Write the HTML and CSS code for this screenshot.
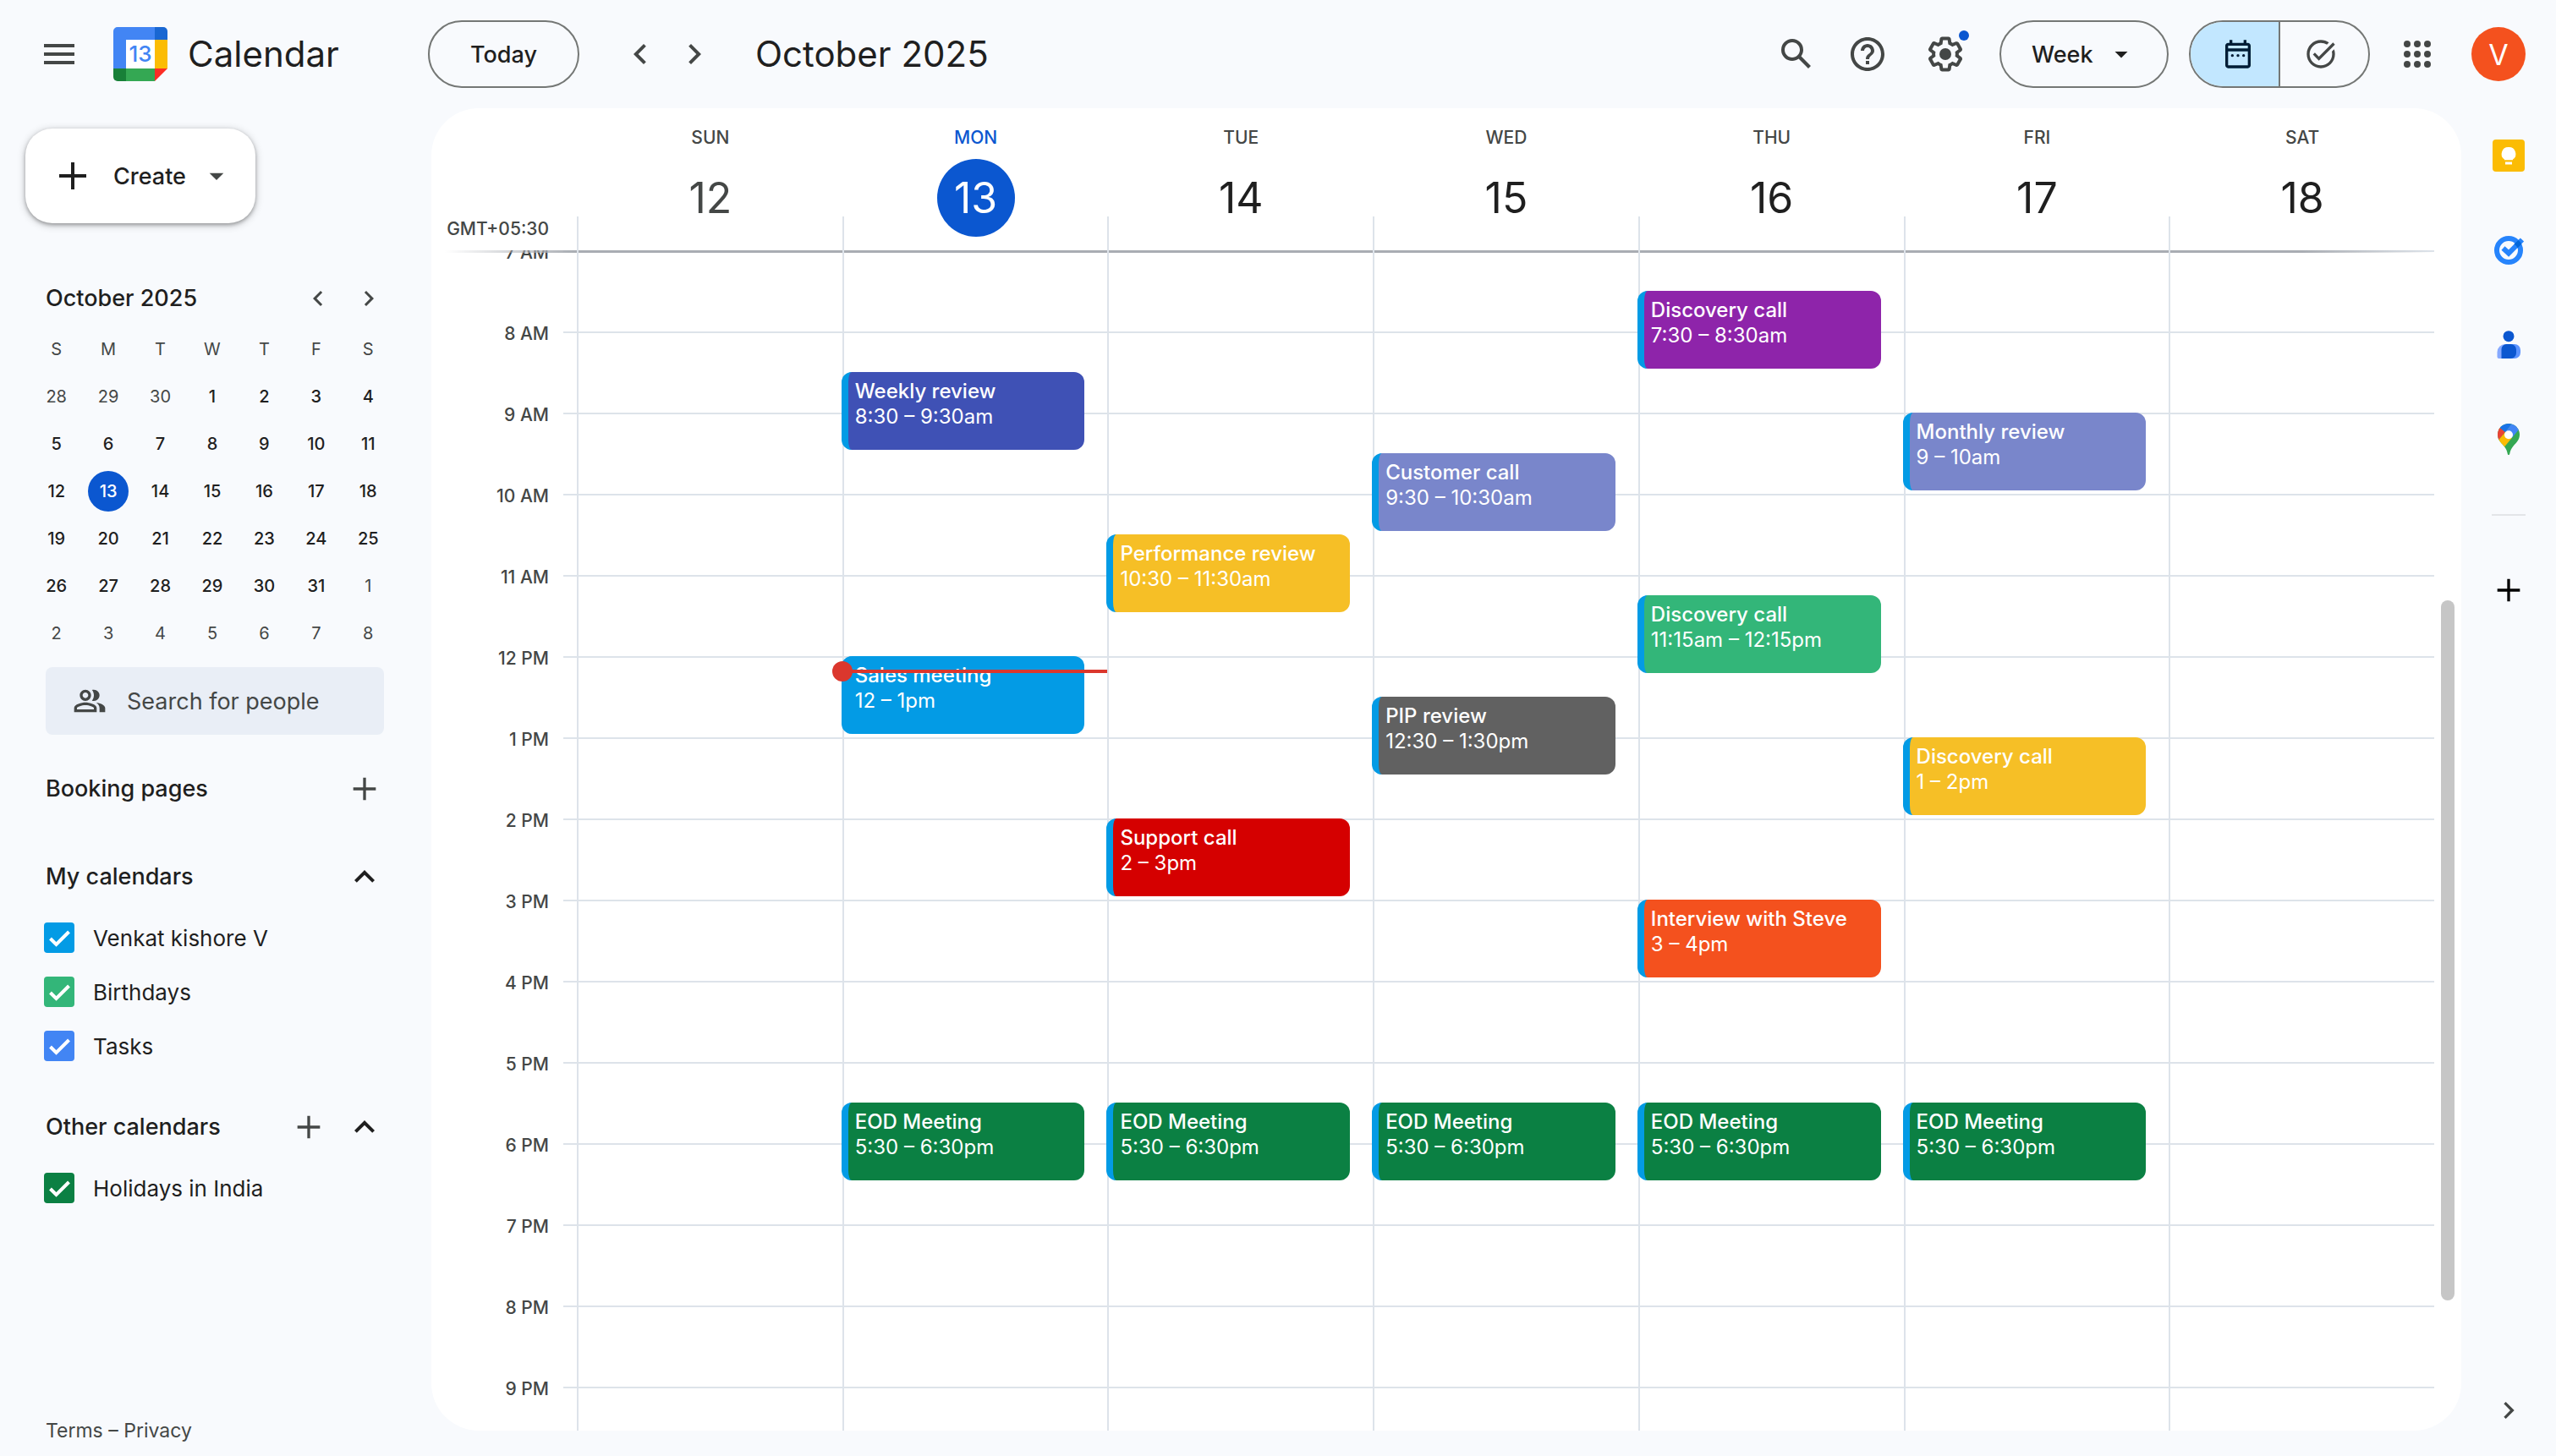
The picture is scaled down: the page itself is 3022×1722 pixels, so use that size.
FILE: index.html
```html
<!DOCTYPE html>
<html lang="en">
<head>
  <meta charset="UTF-8" />
  <meta name="viewport" content="width=device-width, initial-scale=1.0"/>
  <title>Calendar - October 2025</title>
  <link rel="stylesheet" href="styles.css">
</head>
<body>
<div class="app">

  <header class="topbar">
    <div class="brand">
      <button class="icon-btn" aria-label="Main menu">
        <svg class="icon" viewBox="0 0 24 24"><path d="M3 18h18v-2H3v2zm0-5h18v-2H3v2zm0-7v2h18V6H3z"/></svg>
      </button>
      <a class="logo" href="#">
        <svg class="logo-mark" viewBox="0 0 64 64" aria-hidden="true">
          <path fill="#fff" d="M15 15h34v34H15z"/>
          <path fill="#4285f4" d="M5 0h44v15H15v34H0V5a5 5 0 0 1 5-5z"/>
          <path fill="#1967d2" d="M49 0h10a5 5 0 0 1 5 5v10H49z"/>
          <path fill="#fbbc04" d="M49 15h15v34H49z"/>
          <path fill="#34a853" d="M15 49h34v15H15z"/>
          <path fill="#188038" d="M0 49h15v15H5a5 5 0 0 1-5-5z"/>
          <path fill="#fc2d25" d="M49 49h15L49 64z"/>
          <text x="32" y="41" text-anchor="middle" class="logo-day">13</text>
        </svg>
        <span class="logo-name">Calendar</span>
      </a>
    </div>

    <div class="date-nav">
      <button class="pill today">Today</button>
      <div class="arrows">
        <button class="icon-btn" aria-label="Previous week">
          <svg class="icon" viewBox="0 0 24 24"><path d="M15.41 7.41L14 6l-6 6 6 6 1.41-1.41L10.83 12z"/></svg>
        </button>
        <button class="icon-btn" aria-label="Next week">
          <svg class="icon" viewBox="0 0 24 24"><path d="M10 6L8.59 7.41 13.17 12l-4.58 4.59L10 18l6-6z"/></svg>
        </button>
      </div>
      <h1 class="period">October 2025</h1>
    </div>

    <div class="tools">
      <button class="icon-btn" aria-label="Search">
        <svg class="icon" viewBox="0 0 24 24"><path d="M20.49 19l-5.73-5.73C15.53 12.2 16 10.91 16 9.5A6.5 6.5 0 1 0 9.5 16c1.41 0 2.7-.47 3.77-1.24L19 20.49 20.49 19zM5 9.5C5 7.01 7.01 5 9.5 5S14 7.01 14 9.5 11.99 14 9.5 14 5 11.99 5 9.5z"/></svg>
      </button>
      <button class="icon-btn" aria-label="Support">
        <svg class="icon" viewBox="0 0 24 24"><path d="M11 18h2v-2h-2v2zm1-16C6.48 2 2 6.48 2 12s4.48 10 10 10 10-4.48 10-10S17.52 2 12 2zm0 18c-4.41 0-8-3.59-8-8s3.59-8 8-8 8 3.59 8 8-3.59 8-8 8zm0-14c-2.21 0-4 1.79-4 4h2c0-1.1.9-2 2-2s2 .9 2 2c0 2-3 1.75-3 5h2c0-2.25 3-2.5 3-5 0-2.21-1.79-4-4-4z"/></svg>
      </button>
      <button class="icon-btn settings" aria-label="Settings">
        <svg class="icon" viewBox="0 0 24 24"><path d="M13.85 22.25h-3.7c-.74 0-1.36-.54-1.45-1.27l-.27-1.89c-.27-.14-.53-.29-.79-.46l-1.8.72c-.7.26-1.47-.03-1.81-.65L2.2 15.53c-.35-.66-.2-1.44.36-1.88l1.53-1.19c-.01-.15-.02-.3-.02-.46 0-.15.01-.31.02-.46l-1.52-1.19c-.59-.45-.74-1.26-.37-1.88l1.85-3.19c.34-.62 1.11-.9 1.79-.63l1.81.73c.26-.17.52-.32.78-.46l.27-1.91c.09-.7.71-1.25 1.44-1.25h3.7c.74 0 1.36.54 1.45 1.27l.27 1.89c.27.14.53.29.79.46l1.8-.72c.71-.26 1.48.03 1.82.65l1.84 3.18c.36.66.2 1.44-.36 1.88l-1.52 1.19c.01.15.02.3.02.46s-.01.31-.02.46l1.52 1.19c.56.45.72 1.23.37 1.86l-1.86 3.22c-.34.62-1.11.9-1.8.63l-1.8-.72c-.26.17-.52.32-.78.46l-.27 1.91c-.1.68-.72 1.22-1.46 1.22zm-3.23-2h2.76l.37-2.55.53-.22c.44-.18.88-.44 1.34-.78l.45-.34 2.38.96 1.38-2.4-2.03-1.58.07-.56c.03-.26.06-.51.06-.78s-.03-.53-.06-.78l-.07-.56 2.03-1.58-1.39-2.4-2.39.96-.45-.35c-.42-.32-.87-.58-1.33-.77l-.52-.22-.37-2.55h-2.76l-.37 2.55-.53.21c-.44.19-.88.44-1.34.79l-.45.33-2.38-.95-1.39 2.39 2.03 1.58-.07.56a7 7 0 0 0-.06.79c0 .26.02.53.06.78l.07.56-2.03 1.58 1.38 2.4 2.39-.96.45.35c.43.33.86.58 1.33.77l.53.22.38 2.55z"/><circle cx="12" cy="12" r="3.5"/></svg>
        <span class="badge"></span>
      </button>
      <div class="view-select">
        <select class="pill" aria-label="View">
          <option>Day</option>
          <option selected>Week</option>
          <option>Month</option>
          <option>Year</option>
        </select>
        <svg class="caret" viewBox="0 0 24 24" aria-hidden="true"><path d="M7 10l5 5 5-5z"/></svg>
      </div>
      <div class="mode-switch">
        <button class="mode active" aria-label="Calendar view" aria-pressed="true">
          <svg class="icon-md" viewBox="0 0 24 24"><path d="M19 4h-1V2h-2v2H8V2H6v2H5c-1.1 0-2 .9-2 2v14c0 1.1.9 2 2 2h14c1.1 0 2-.9 2-2V6c0-1.1-.9-2-2-2zm0 16H5V10h14v10zm0-12H5V6h14v2z"/><circle cx="8" cy="13" r="1"/><circle cx="12" cy="13" r="1"/><circle cx="16" cy="13" r="1"/></svg>
        </button>
        <button class="mode" aria-label="Tasks view" aria-pressed="false">
          <svg class="icon-md" viewBox="0 0 24 24"><path d="M22 5.18L10.59 16.6l-4.24-4.24 1.41-1.41 2.83 2.83 10-10L22 5.18zm-2.21 5.04c.13.57.21 1.17.21 1.78 0 4.42-3.58 8-8 8s-8-3.58-8-8 3.58-8 8-8c1.58 0 3.04.46 4.28 1.25l1.44-1.44C16.1 2.67 14.13 2 12 2 6.48 2 2 6.48 2 12s4.48 10 10 10 10-4.48 10-10c0-1.19-.22-2.33-.6-3.39l-1.61 1.61z"/></svg>
        </button>
      </div>
      <button class="icon-btn apps" aria-label="Google apps">
        <svg class="icon" viewBox="0 0 24 24"><circle cx="6" cy="6" r="2"/><circle cx="12" cy="6" r="2"/><circle cx="18" cy="6" r="2"/><circle cx="6" cy="12" r="2"/><circle cx="12" cy="12" r="2"/><circle cx="18" cy="12" r="2"/><circle cx="6" cy="18" r="2"/><circle cx="12" cy="18" r="2"/><circle cx="18" cy="18" r="2"/></svg>
      </button>
      <button class="avatar" aria-label="Account">V</button>
    </div>
  </header>

  <aside class="sidebar">
    <button class="create">
      <svg class="icon" viewBox="0 0 24 24"><path d="M20 13h-7v7h-2v-7H4v-2h7V4h2v7h7v2z"/></svg>
      <span>Create</span>
      <svg class="icon-md" viewBox="0 0 24 24"><path d="M7 10l5 5 5-5z"/></svg>
    </button>

    <section class="mini">
      <div class="mini-head">
        <h2>October 2025</h2>
        <button class="mini-arrow" aria-label="Previous month">
          <svg class="icon-sm" viewBox="0 0 24 24"><path d="M15.41 7.41L14 6l-6 6 6 6 1.41-1.41L10.83 12z"/></svg>
        </button>
        <button class="mini-arrow" aria-label="Next month">
          <svg class="icon-sm" viewBox="0 0 24 24"><path d="M10 6L8.59 7.41 13.17 12l-4.58 4.59L10 18l6-6z"/></svg>
        </button>
      </div>
      <table class="mini-table">
        <thead>
          <tr><th>S</th><th>M</th><th>T</th><th>W</th><th>T</th><th>F</th><th>S</th></tr>
        </thead>
        <tbody>
          <tr><td class="out">28</td><td class="out">29</td><td class="out">30</td><td>1</td><td>2</td><td>3</td><td>4</td></tr>
          <tr><td>5</td><td>6</td><td>7</td><td>8</td><td>9</td><td>10</td><td>11</td></tr>
          <tr><td>12</td><td><span class="mini-today">13</span></td><td>14</td><td>15</td><td>16</td><td>17</td><td>18</td></tr>
          <tr><td>19</td><td>20</td><td>21</td><td>22</td><td>23</td><td>24</td><td>25</td></tr>
          <tr><td>26</td><td>27</td><td>28</td><td>29</td><td>30</td><td>31</td><td class="out">1</td></tr>
          <tr><td class="out">2</td><td class="out">3</td><td class="out">4</td><td class="out">5</td><td class="out">6</td><td class="out">7</td><td class="out">8</td></tr>
        </tbody>
      </table>
    </section>

    <label class="people">
      <svg class="icon-md" viewBox="0 0 24 24" aria-hidden="true"><path d="M15 8c0-1.42-.5-2.73-1.33-3.76.42-.14.86-.24 1.33-.24 2.21 0 4 1.79 4 4s-1.79 4-4 4c-.43 0-.84-.09-1.23-.21-.03-.01-.06-.02-.1-.03C14.5 10.73 15 9.42 15 8zm1.66 5.13C18.03 14.06 19 15.32 19 17v3h4v-3c0-2.18-3.58-3.47-6.34-3.87zM9 6c1.1 0 2 .9 2 2s-.9 2-2 2-2-.9-2-2 .9-2 2-2m0 9c2.7 0 5.8 1.29 6 2v1H3v-.99c.2-.72 3.3-2.01 6-2.01M9 4C6.79 4 5 5.79 5 8s1.79 4 4 4 4-1.79 4-4-1.79-4-4-4zm0 9c-2.67 0-8 1.34-8 4v3h16v-3c0-2.66-5.33-4-8-4z"/></svg>
      <input type="text" placeholder="Search for people" aria-label="Search for people">
    </label>

    <section class="side-section">
      <div class="side-head">
        <h2>Booking pages</h2>
        <button class="side-btn" aria-label="Create booking page">
          <svg class="icon-md" viewBox="0 0 24 24"><path d="M20 13h-7v7h-2v-7H4v-2h7V4h2v7h7v2z"/></svg>
        </button>
      </div>
    </section>

    <section class="side-section">
      <div class="side-head">
        <h2>My calendars</h2>
        <button class="side-btn dark" aria-label="Collapse my calendars">
          <svg class="icon" viewBox="0 0 24 24"><path d="M12 8l-6 6 1.41 1.41L12 10.83l4.59 4.58L18 14z"/></svg>
        </button>
      </div>
      <label class="cal-item"><input type="checkbox" class="check peacock" checked> Venkat kishore V</label>
      <label class="cal-item"><input type="checkbox" class="check sage" checked> Birthdays</label>
      <label class="cal-item"><input type="checkbox" class="check tasks" checked> Tasks</label>
    </section>

    <section class="side-section">
      <div class="side-head">
        <h2>Other calendars</h2>
        <button class="side-btn" aria-label="Add other calendars">
          <svg class="icon-md" viewBox="0 0 24 24"><path d="M20 13h-7v7h-2v-7H4v-2h7V4h2v7h7v2z"/></svg>
        </button>
        <button class="side-btn dark" aria-label="Collapse other calendars">
          <svg class="icon" viewBox="0 0 24 24"><path d="M12 8l-6 6 1.41 1.41L12 10.83l4.59 4.58L18 14z"/></svg>
        </button>
      </div>
      <label class="cal-item"><input type="checkbox" class="check basil" checked> Holidays in India</label>
    </section>

    <div class="legal"><a href="#">Terms</a> – <a href="#">Privacy</a></div>
  </aside>

  <main class="week">
    <div class="week-head">
      <div class="tz">GMT+05:30</div>
      <div class="day-head past"><span class="dow">SUN</span><span class="num">12</span></div>
      <div class="day-head current"><span class="dow">MON</span><span class="num">13</span></div>
      <div class="day-head"><span class="dow">TUE</span><span class="num">14</span></div>
      <div class="day-head"><span class="dow">WED</span><span class="num">15</span></div>
      <div class="day-head"><span class="dow">THU</span><span class="num">16</span></div>
      <div class="day-head"><span class="dow">FRI</span><span class="num">17</span></div>
      <div class="day-head"><span class="dow">SAT</span><span class="num">18</span></div>
    </div>

    <div class="week-body">
      <div class="hours">
        <span>7 AM</span><span>8 AM</span><span>9 AM</span><span>10 AM</span><span>11 AM</span>
        <span>12 PM</span><span>1 PM</span><span>2 PM</span><span>3 PM</span><span>4 PM</span>
        <span>5 PM</span><span>6 PM</span><span>7 PM</span><span>8 PM</span><span>9 PM</span>
      </div>

      <!-- every day column is split in 15 minute rows, row 1 = 7 AM -->
      <div class="days">
        <div class="day"></div>
        <div class="day">
          <button class="event blueberry" style="grid-row: 7 / span 4"><b>Weekly review</b><span>8:30 – 9:30am</span></button>
          <button class="event peacock" style="grid-row: 21 / span 4"><b>Sales meeting</b><span>12 – 1pm</span></button>
          <button class="event basil" style="grid-row: 43 / span 4"><b>EOD Meeting</b><span>5:30 – 6:30pm</span></button>
          <div class="now"></div>
        </div>
        <div class="day">
          <button class="event banana" style="grid-row: 15 / span 4"><b>Performance review</b><span>10:30 – 11:30am</span></button>
          <button class="event tomato" style="grid-row: 29 / span 4"><b>Support call</b><span>2 – 3pm</span></button>
          <button class="event basil" style="grid-row: 43 / span 4"><b>EOD Meeting</b><span>5:30 – 6:30pm</span></button>
        </div>
        <div class="day">
          <button class="event lavender" style="grid-row: 11 / span 4"><b>Customer call</b><span>9:30 – 10:30am</span></button>
          <button class="event graphite" style="grid-row: 23 / span 4"><b>PIP review</b><span>12:30 – 1:30pm</span></button>
          <button class="event basil" style="grid-row: 43 / span 4"><b>EOD Meeting</b><span>5:30 – 6:30pm</span></button>
        </div>
        <div class="day">
          <button class="event grape" style="grid-row: 3 / span 4"><b>Discovery call</b><span>7:30 – 8:30am</span></button>
          <button class="event sage" style="grid-row: 18 / span 4"><b>Discovery call</b><span>11:15am – 12:15pm</span></button>
          <button class="event tangerine" style="grid-row: 33 / span 4"><b>Interview with Steve</b><span>3 – 4pm</span></button>
          <button class="event basil" style="grid-row: 43 / span 4"><b>EOD Meeting</b><span>5:30 – 6:30pm</span></button>
        </div>
        <div class="day">
          <button class="event lavender" style="grid-row: 9 / span 4"><b>Monthly review</b><span>9 – 10am</span></button>
          <button class="event banana" style="grid-row: 25 / span 4"><b>Discovery call</b><span>1 – 2pm</span></button>
          <button class="event basil" style="grid-row: 43 / span 4"><b>EOD Meeting</b><span>5:30 – 6:30pm</span></button>
        </div>
        <div class="day"></div>
      </div>

      <div class="scroll-track"><div class="scroll-thumb"></div></div>
    </div>
  </main>

  <nav class="rail">
    <a href="#" aria-label="Keep">
      <svg class="icon-md" viewBox="0 0 40 40"><rect x="1" y="1" width="38" height="38" rx="4" fill="#fbbc04"/><path fill="#fff" d="M20 10a8 8 0 0 0-5 14.5v.7h10v-.7A8 8 0 0 0 20 10z"/><path fill="#fff" d="M16 27.5h8v3h-8z"/></svg>
    </a>
    <a href="#" aria-label="Tasks">
      <svg class="icon-md" viewBox="0 0 40 40"><circle cx="20" cy="20" r="14" fill="none" stroke="#2684fc" stroke-width="6"/><path d="M13.5 17.5l6.5 6L36 7.5" fill="none" stroke="#2684fc" stroke-width="6"/><path fill="#0066da" d="M26.500 12.800l5-4.900c1.800 1.500 3 3.100 3.700 4.900l-4.700 4.700c-.8-2-2.100-3.600-4-4.700z"/></svg>
    </a>
    <a href="#" aria-label="Contacts">
      <svg class="icon-md" viewBox="0 0 40 40"><path fill="#86a9ff" d="M16 19h8v17H8.5a2 2 0 0 1-2-2v-5.5A9.5 9.500 0 0 1 16 19z"/><path fill="#5c94ff" d="M22 19h5a7 7 0 0 1 7 7v3a7 7 0 0 1-7 7h-5z"/><path fill="#0b57d0" d="M17.5 19h5a6.5 6.5 0 0 1 6.5 6.5v4a6.500 6.500 0 0 1-6.500 6.500h-11V25a6 6 0 0 1 6-6z"/><circle cx="20" cy="9.7" r="6.5" fill="#0b57d0"/></svg>
    </a>
    <a href="#" aria-label="Maps">
      <svg class="icon-md" viewBox="0 0 40 40">
        <clipPath id="pin"><path d="M20 1C12.800 1 7 6.800 7 14c0 6 3.500 9 7 13 3 3.500 4 6 4.700 9.500.4 2 2.200 2 2.600 0C22 33 23 30.500 26 27c3.500-4 7-7 7-13C33 6.800 27.200 1 20 1z"/></clipPath>
        <g clip-path="url(#pin)">
          <path fill="#34a853" d="M0 0h40v40H0z"/>
          <path fill="#ea4335" d="M0 0l10.500 6.500L16 11l-7.500 9H0z"/>
          <path fill="#1a73e8" d="M10.500 6.500L6 0h18.500L16 11z"/>
          <path fill="#4285f4" d="M24.500 0H40l-7 7-9.200 11L16 11z"/>
          <path fill="#fbbc04" d="M16 11l7.800 7L15 28.500 8 20.500z"/>
        </g>
        <circle cx="20" cy="14.300" r="5" fill="#fff"/>
      </svg>
    </a>
    <hr class="rail-line">
    <button class="icon-btn add-on" aria-label="Get add-ons">
      <svg class="icon-md" viewBox="0 0 24 24"><path d="M20 13h-7v7h-2v-7H4v-2h7V4h2v7h7v2z"/></svg>
    </button>
    <button class="icon-btn rail-hide" aria-label="Hide side panel">
      <svg class="icon-md" viewBox="0 0 24 24"><path d="M10 6L8.59 7.41 13.17 12l-4.58 4.59L10 18l6-6z"/></svg>
    </button>
  </nav>

</div>
</body>
</html>
```

FILE: styles.css
```css
* {
  box-sizing: border-box;
}

html, body {
  margin: 0;
  padding: 0;
  background-color: #f8fafd;
  font-family: Inter, Roboto, sans-serif;
  color: #1f1f1f;
}

button, select, input {
  font: inherit;
  color: inherit;
}

button {
  border: 0;
  padding: 0;
  background: none;
  cursor: pointer;
}

a {
  color: inherit;
  text-decoration: none;
}

h1, h2 {
  margin: 0;
}

svg {
  display: block;
  fill: currentColor;
}

.icon { width: 48px; height: 48px; }
.icon-md { width: 40px; height: 40px; }
.icon-sm { width: 36px; height: 36px; }

.app {
  display: grid;
  grid-template-columns: 510px 1fr 112px;
  grid-template-rows: 128px 1fr;
  height: 100vh;
}

/* top bar */

.topbar {
  grid-column: 1 / -1;
  display: flex;
  align-items: center;
  padding-right: 36px;
}

.brand {
  display: flex;
  align-items: center;
  width: 506px;
  padding-left: 38px;
}

.icon-btn {
  display: flex;
  align-items: center;
  justify-content: center;
  width: 64px;
  height: 64px;
  color: #444746;
}

.logo {
  display: flex;
  align-items: center;
  gap: 24px;
  margin-left: 32px;
}

.logo-mark {
  width: 64px;
  height: 64px;
}

.logo-day {
  font-size: 26px;
  font-weight: 500;
  fill: #4285f4;
}

.logo-name, .period {
  font-size: 42px;
  font-weight: 400;
  line-height: 56px;
}

.date-nav {
  display: flex;
  align-items: center;
}

.pill {
  height: 80px;
  border: 2px solid #747775;
  border-radius: 40px;
  background: none;
  font-size: 27px;
  font-weight: 500;
}

.today {
  width: 179px;
}

.arrows {
  display: flex;
  margin: 0 40px;
}

.tools {
  display: flex;
  align-items: center;
  margin-left: auto;
}

.tools .icon-btn {
  margin-right: 20px;
}

.tools .settings {
  position: relative;
  margin-left: 8px;
  margin-right: 32px;
}

.badge {
  position: absolute;
  top: 4px;
  right: 4px;
  width: 12px;
  height: 12px;
  border-radius: 50%;
  background-color: #0b57d0;
}

.view-select {
  position: relative;
  margin-right: 24px;
}

.view-select .pill {
  appearance: none;
  width: 200px;
  padding: 0 36px;
}

.caret {
  position: absolute;
  top: 22px;
  right: 38px;
  width: 36px;
  height: 36px;
  pointer-events: none;
}

.mode-switch {
  display: flex;
  width: 214px;
  height: 80px;
  margin-right: 24px;
  border: 2px solid #747775;
  border-radius: 40px;
  overflow: hidden;
}

.mode {
  flex: 1;
  display: flex;
  align-items: center;
  justify-content: center;
  padding-right: 8px;
  color: #444746;
}

.mode.active {
  padding-right: 0;
  padding-left: 8px;
  border-right: 2px solid #747775;
  background-color: #c2e7ff;
  color: #001d35;
}

.tools .apps {
  margin-right: 32px;
}

.avatar {
  width: 64px;
  height: 64px;
  border-radius: 50%;
  background-color: #f4511e;
  color: #fff;
  font-size: 34px;
}

/* left side */

.sidebar {
  display: flex;
  flex-direction: column;
  padding: 24px 56px 16px 54px;
}

.create {
  display: flex;
  align-items: center;
  align-self: flex-start;
  gap: 16px;
  width: 272px;
  height: 112px;
  margin-left: -24px;
  padding-left: 32px;
  border-radius: 32px;
  background-color: #fff;
  box-shadow: 0 2px 4px rgba(0, 0, 0, 0.3), 0 2px 8px 2px rgba(0, 0, 0, 0.15);
  font-size: 27px;
  font-weight: 500;
}

.create span {
  margin-left: 8px;
}

.create .icon-md {
  color: #444746;
}

.mini-head {
  display: flex;
  align-items: center;
  height: 60px;
  margin-top: 59px;
}

.mini-head h2, .side-head h2 {
  flex: 1;
  font-size: 27px;
  font-weight: 500;
  line-height: 40px;
}

.mini-arrow {
  display: flex;
  justify-content: center;
  width: 60px;
  color: #444746;
}

.mini-head .mini-arrow:last-child {
  margin-right: -12px;
}

.mini-table {
  width: 430px;
  margin: 2px -14px 12px -18px;
  border-collapse: collapse;
  table-layout: fixed;
  text-align: center;
  font-size: 20px;
}

.mini-table th, .mini-table td {
  height: 56px;
  padding: 0;
  font-weight: 500;
}

.mini-table th, .mini-table .out {
  color: #444746;
  font-weight: 400;
}

.mini-today {
  display: block;
  width: 48px;
  margin: 0 auto;
  border-radius: 50%;
  background-color: #0b57d0;
  color: #fff;
  line-height: 48px;
}

.people {
  display: flex;
  align-items: center;
  gap: 24px;
  height: 80px;
  padding: 0 32px;
  border-radius: 8px;
  background-color: #e9eef6;
  color: #444746;
}

.people svg {
  flex: none;
}

.people input {
  flex: 1;
  min-width: 0;
  padding: 0;
  border: 0;
  outline: 0;
  background: none;
  font-size: 27px;
}

.people input::placeholder {
  color: #444746;
}

.side-section {
  padding-top: 24px;
}

.side-head {
  display: flex;
  align-items: center;
  height: 80px;
}

.side-btn {
  display: flex;
  align-items: center;
  justify-content: center;
  width: 66px;
  height: 66px;
  color: #444746;
}

.side-btn:last-child {
  margin-right: -10px;
}

.side-btn.dark {
  color: #1f1f1f;
}

.cal-item {
  display: flex;
  align-items: center;
  gap: 22px;
  height: 64px;
  margin-left: -2px;
  font-size: 26px;
}

.check {
  appearance: none;
  width: 36px;
  height: 36px;
  margin: 0;
  border-radius: 4px;
  background: url("data:image/svg+xml,%3Csvg xmlns='http://www.w3.org/2000/svg' viewBox='0 0 36 36'%3E%3Cpath d='M7.500 19l7 7 15-15' fill='none' stroke='%23fff' stroke-width='4'/%3E%3C/svg%3E") center / contain no-repeat;
}

.check.tasks { background-color: #4285f4; }

.legal {
  margin-top: auto;
  color: #444746;
  font-size: 23px;
  line-height: 28px;
}

/* week grid */

.week {
  display: flex;
  flex-direction: column;
  min-height: 0;
  margin-bottom: 30px;
  border-radius: 56px;
  background-color: #fff;
  overflow: hidden;
}

.week-head {
  display: grid;
  grid-template-columns: 172px repeat(7, 1fr);
  height: 168px;
  margin-right: 32px;
}

.tz {
  align-self: end;
  padding: 0 33px 10px 0;
  text-align: right;
  white-space: nowrap;
  color: #444746;
  font-size: 21px;
  font-weight: 500;
  line-height: 30px;
}

.day-head {
  display: flex;
  flex-direction: column;
  align-items: center;
  padding: 20px 0 0 2px;
  background: linear-gradient(#dde3ea, #dde3ea) left bottom / 2px 40px no-repeat;
}

.dow {
  color: #444746;
  font-size: 21px;
  font-weight: 500;
  line-height: 30px;
}

.num {
  width: 92px;
  margin-top: 10px;
  border-radius: 50%;
  text-align: center;
  font-size: 50px;
  line-height: 92px;
}

.past .num {
  color: #444746;
}

.current .dow {
  color: #0b57d0;
}

.current .num {
  background-color: #0b57d0;
  color: #fff;
}

.week-body {
  position: relative;
  flex: 1;
  display: flex;
  min-height: 0;
  overflow: hidden;
}

/* line under the day names, fades out at both ends */
.week-body::before {
  content: "";
  position: absolute;
  top: 0;
  left: 16px;
  right: 32px;
  height: 3px;
  background: linear-gradient(to right, transparent, #a9adb3 156px, #a9adb3 calc(100% - 156px), transparent);
}

.hours {
  width: 156px;
  margin-top: -11px;
  padding-right: 17px;
  text-align: right;
  color: #444746;
  font-size: 21px;
  font-weight: 500;
  line-height: 28px;
}

.hours span {
  display: block;
  height: 96px;
}

.days {
  flex: 1;
  display: grid;
  grid-template-columns: repeat(7, 1fr);
  padding-left: 16px;
  background: repeating-linear-gradient(#dde3ea 0 2px, transparent 2px 96px);
}

.day {
  position: relative;
  display: grid;
  grid-template-rows: repeat(60, 24px);
  min-width: 0;
  border-left: 2px solid #dde3ea;
}

.event {
  display: flex;
  flex-direction: column;
  align-items: flex-start;
  min-width: 0;
  margin: 0 27px 4px -3px;
  padding: 8px 0 0 8px;
  border-left: 8px solid #039be5;
  border-radius: 12px;
  color: #fff;
  font-size: 24px;
  line-height: 30px;
  text-align: left;
  white-space: nowrap;
}

.event b {
  font-weight: 500;
}

.blueberry { background-color: #3f51b5; }
.peacock { background-color: #039be5; }
.basil { background-color: #0b8043; }
.banana { background-color: #f6bf26; }
.tomato { background-color: #d50000; }
.lavender { background-color: #7986cb; }
.graphite { background-color: #616161; }
.grape { background-color: #8e24aa; }
.sage { background-color: #33b679; }
.tangerine { background-color: #f4511e; }

/* current time, 12:10 PM */
.now {
  position: absolute;
  top: 496px;
  left: -2px;
  right: 0;
  height: 4px;
  background-color: #db372d;
}

.now::before {
  content: "";
  position: absolute;
  top: -10px;
  left: -12px;
  width: 24px;
  height: 24px;
  border-radius: 50%;
  background-color: #db372d;
}

.scroll-track {
  display: grid;
  grid-template-rows: 414fr 828fr 154fr;
  width: 32px;
  padding: 0 8px;
}

.scroll-thumb {
  grid-row: 2;
  border-radius: 8px;
  background-color: #c6c6c6;
}

/* right rail */

.rail {
  display: flex;
  flex-direction: column;
  align-items: center;
}

.rail a {
  display: flex;
  align-items: center;
  height: 112px;
}

.rail-line {
  width: 40px;
  margin: 32px 0 56px;
  border: 0;
  border-top: 2px solid #e3e5e8;
}

.rail .add-on {
  color: #000;
}

.rail-hide {
  margin-top: auto;
  margin-bottom: 22px;
}
```
